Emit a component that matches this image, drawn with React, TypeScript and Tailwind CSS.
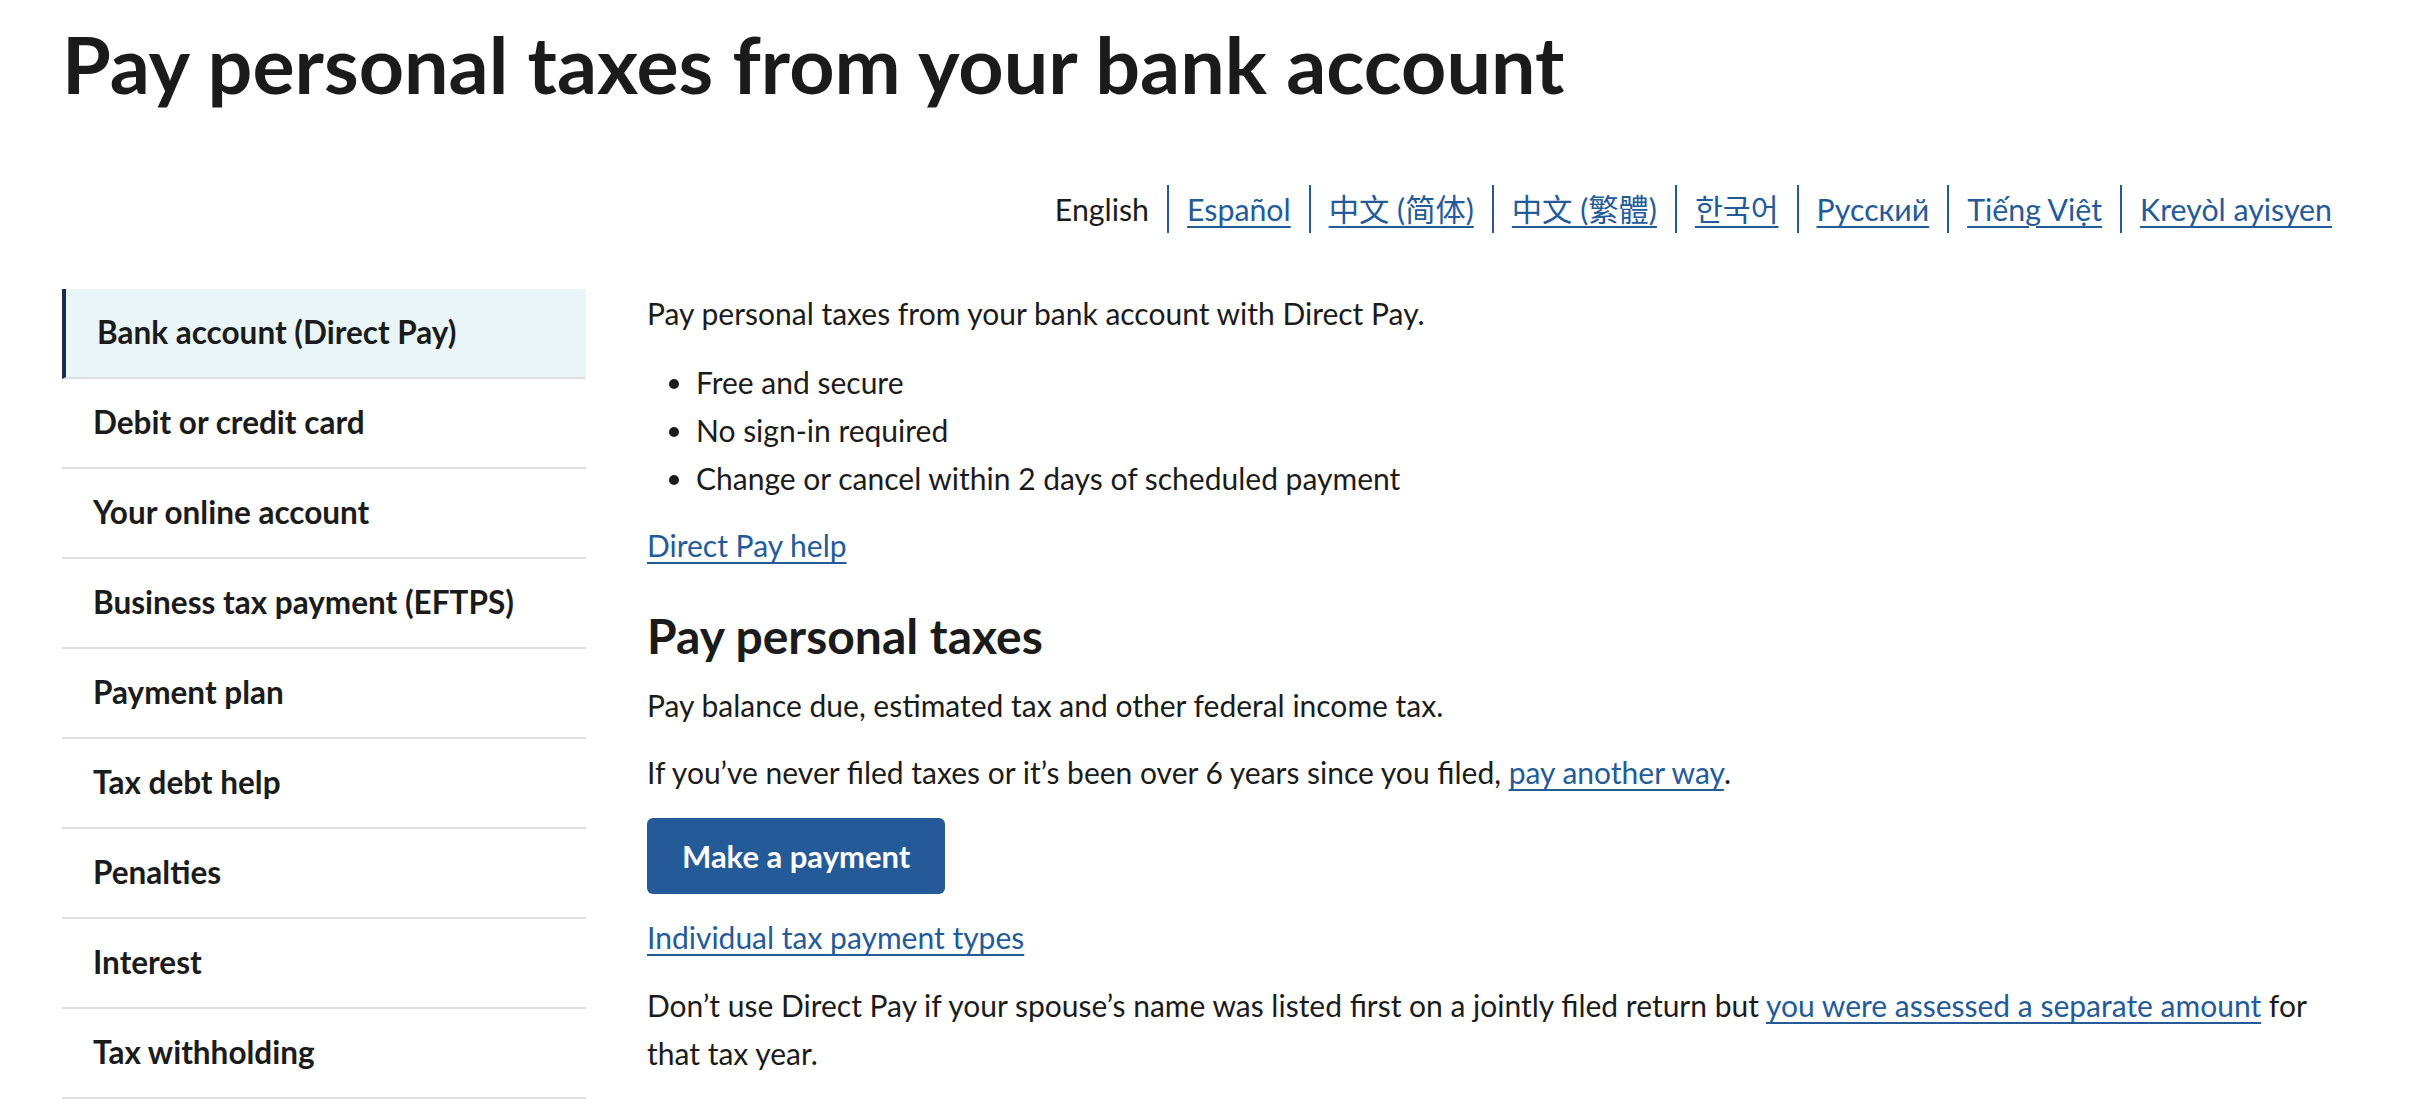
const languages = [
  { label: "English", current: true },
  { label: "Español" },
  { label: "中文 (简体)" },
  { label: "中文 (繁體)" },
  { label: "한국어" },
  { label: "Русский" },
  { label: "Tiếng Việt" },
  { label: "Kreyòl ayisyen" },
];

const sideLinks = [
  "Bank account (Direct Pay)",
  "Debit or credit card",
  "Your online account",
  "Business tax payment (EFTPS)",
  "Payment plan",
  "Tax debt help",
  "Penalties",
  "Interest",
  "Tax withholding",
];

function TextLink({ children }: { children: React.ReactNode }) {
  return (
    <a
      href="#"
      className="text-[#255a99] underline decoration-2 underline-offset-[5px]"
    >
      {children}
    </a>
  );
}

export default function App() {
  return (
    <div className="min-h-screen bg-white px-[62px] font-['Lato','Noto_Sans_CJK_SC',sans-serif] text-[#1b1b1b]">
      <h1 className="pt-[20px] text-[79px] font-bold leading-[88px]">
        Pay personal taxes from your bank account
      </h1>

      {/* language switcher */}
      <ul className="mt-[77px] flex justify-end text-[30.3px] leading-[48px]">
        {languages.map((lang, i) => (
          <li
            key={lang.label}
            className={
              i === 0
                ? "px-[18px]"
                : "border-l-2 border-[#255a99] px-[18px]"
            }
          >
            {lang.current ? (
              <span>{lang.label}</span>
            ) : (
              <TextLink>{lang.label}</TextLink>
            )}
          </li>
        ))}
      </ul>

      <div className="mt-[56px] flex gap-[61px]">
        <nav className="w-[524px] shrink-0">
          <ul>
            {sideLinks.map((item, i) => (
              <li
                key={item}
                className={
                  i === 0
                    ? "flex h-[90px] items-center border-b-2 border-l-4 border-b-[#dcdee0] border-l-[#162e51] bg-[#e9f5f7] pl-[31px] text-[31.5px] font-bold"
                    : "flex h-[90px] items-center border-b-2 border-[#dcdee0] pl-[31px] text-[31.5px] font-bold"
                }
              >
                {item}
              </li>
            ))}
          </ul>
        </nav>

        <main className="flex-1 text-[30px] leading-[48px]">
          <p className="mb-[21px]">
            Pay personal taxes from your bank account with Direct Pay.
          </p>
          <ul className="mb-[19px] list-disc pl-[49px]">
            <li>Free and secure</li>
            <li>No sign-in required</li>
            <li>Change or cancel within 2 days of scheduled payment</li>
          </ul>
          <p>
            <TextLink>Direct Pay help</TextLink>
          </p>

          <h2 className="mt-[38px] mb-[16px] text-[48px] font-bold leading-[58px]">
            Pay personal taxes
          </h2>
          <p className="mb-[19px]">
            Pay balance due, estimated tax and other federal income tax.
          </p>
          <p className="mb-[22px]">
            If you’ve never filed taxes or it’s been over 6 years since you
            filed, <TextLink>pay another way</TextLink>.
          </p>
          <button className="mb-[19px] h-[76px] rounded-[6px] bg-[#255a99] px-[35px] text-[31px] font-bold text-white">
            Make a payment
          </button>
          <p className="mb-[20px]">
            <TextLink>Individual tax payment types</TextLink>
          </p>
          <p className="max-w-[1703px]">
            Don’t use Direct Pay if your spouse’s name was listed first on a
            jointly filed return but{" "}
            <TextLink>you were assessed a separate amount</TextLink> for that
            tax year.
          </p>
        </main>
      </div>
    </div>
  );
}
